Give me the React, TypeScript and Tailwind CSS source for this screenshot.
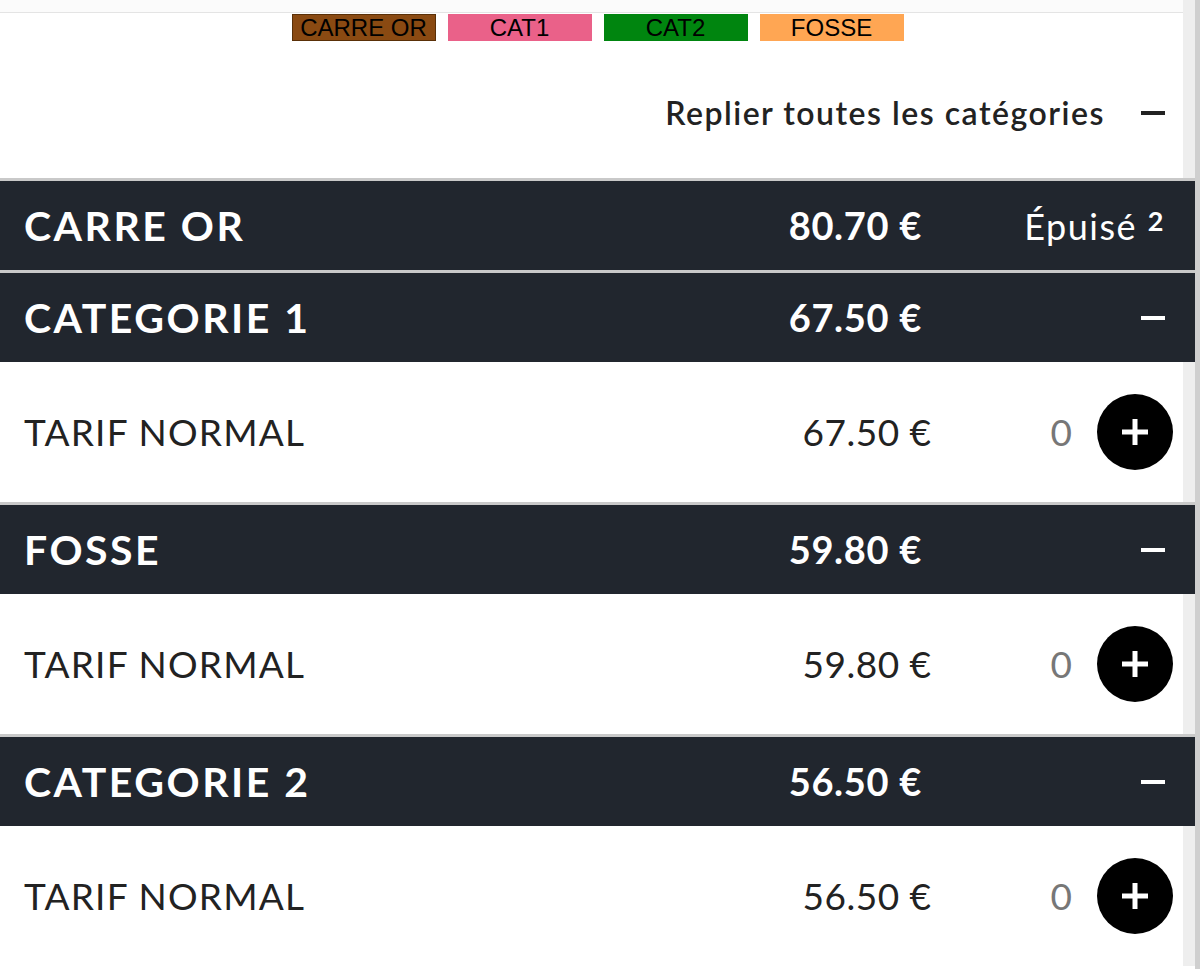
import { Fragment } from "react";

type Section = {
  name: string;
  price: string;
  soldOut?: boolean;
  tarifs: { label: string; price: string }[];
};

const legend = [
  { label: "CARRE OR", color: "bg-[#8a4a12] border border-[#5a3008]" },
  { label: "CAT1", color: "bg-[#ea6189]" },
  { label: "CAT2", color: "bg-[#00850f]" },
  { label: "FOSSE", color: "bg-[#ffa653]" },
];

const sections: Section[] = [
  { name: "CARRE OR", price: "80.70 €", soldOut: true, tarifs: [] },
  { name: "CATEGORIE 1", price: "67.50 €", tarifs: [{ label: "TARIF NORMAL", price: "67.50 €" }] },
  { name: "FOSSE", price: "59.80 €", tarifs: [{ label: "TARIF NORMAL", price: "59.80 €" }] },
  { name: "CATEGORIE 2", price: "56.50 €", tarifs: [{ label: "TARIF NORMAL", price: "56.50 €" }] },
];

const font = { fontFamily: "Lato, 'Open Sans', sans-serif" };

const Minus = ({ className }: { className: string }) => <span className={`block h-[4px] w-[24px] ${className}`} />;

const SectionHeader = ({ section }: { section: Section }) => (
  <div className="grid h-[89px] grid-cols-[1fr_auto_243px] items-center bg-[#21262e] pl-6 pr-[30px] text-white">
    <span className="text-[41px] font-bold tracking-[2.5px]">{section.name}</span>
    <span className="text-[38px] font-bold tracking-[0.7px]">{section.price}</span>
    <div className="flex justify-end">
      {section.soldOut ? (
        <span className="text-[36px] tracking-[1.5px]">
          Épuisé <span className="relative -top-[9px] text-[27px] font-bold">2</span>
        </span>
      ) : (
        <Minus className="bg-white" />
      )}
    </div>
  </div>
);

const TarifRow = ({ label, price }: { label: string; price: string }) => (
  <div className="flex h-[140px] items-center border-r-[12px] border-[#eeeeee] bg-white pl-6 pr-[10px] text-[#222]">
    <span className="flex-1 text-[37px] tracking-[1.2px]">{label}</span>
    <span className="text-[37px] tracking-[0.5px]">{price}</span>
    <span className="ml-[119px] text-[37px] text-[#777]">0</span>
    <button className="ml-[25px] flex h-[76px] w-[76px] items-center justify-center rounded-full bg-black">
      <svg width="30" height="30" viewBox="0 0 30 30">
        <path d="M15 2v26M2 15h26" stroke="white" strokeWidth="5" />
      </svg>
    </button>
  </div>
);

export default function App() {
  return (
    <div className="min-h-screen w-[1200px] bg-white" style={font}>
      <div className="min-h-screen border-r-[5px] border-[#cfcfcf]">
        <div className="border-r-[12px] border-[#eeeeee]">
          <div className="h-[13px] border-b border-[#e4e4e4] bg-[#fbfbfb]" />
          <div className="mt-[1px] flex justify-center gap-3 pl-[12px]">
            {legend.map((l) => (
              <div
                key={l.label}
                className={`flex h-[27px] w-[144px] items-center justify-center text-[24px] leading-none text-black ${l.color}`}
                style={{ fontFamily: "'Liberation Sans', Arial, sans-serif" }}
              >
                {l.label}
              </div>
            ))}
          </div>
          <div className="flex h-[137px] items-center justify-end gap-[36px] pr-[18px] pt-[6px] text-[#222]">
            <span className="text-[32px] font-semibold tracking-[1.5px]">Replier toutes les catégories</span>
            <Minus className="bg-[#222]" />
          </div>
        </div>
        {sections.map((s) => (
          <Fragment key={s.name}>
            <div className="h-[3px] bg-[#c9c9c9]" />
            <SectionHeader section={s} />
            {s.tarifs.map((t) => (
              <TarifRow key={t.label} label={t.label} price={t.price} />
            ))}
          </Fragment>
        ))}
      </div>
    </div>
  );
}
